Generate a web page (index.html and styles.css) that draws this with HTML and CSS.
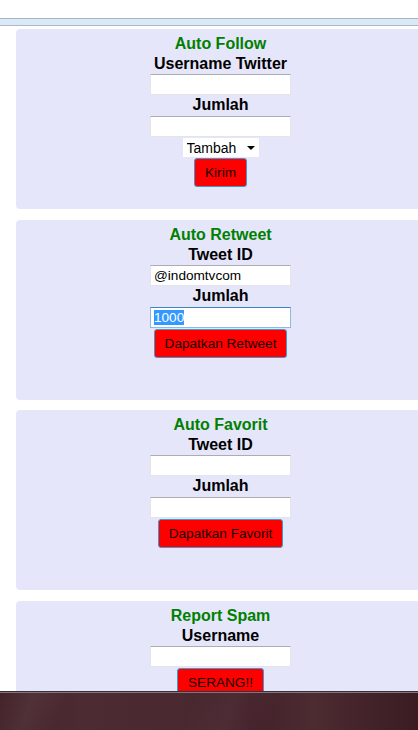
FILE: index.html
```html
<!DOCTYPE html>
<html lang="id">
<head>
<meta charset="utf-8">
<title>Auto Follow Twitter</title>
<link rel="stylesheet" href="styles.css">
</head>
<body>
<div class="topspace"></div>
<div class="topbar"></div>
<main class="cards">
  <section class="card">
    <h2 class="title">Auto Follow</h2>
    <div class="label">Username Twitter</div>
    <input class="field" type="text">
    <div class="label gap">Jumlah</div>
    <input class="field" type="text">
    <div class="select">
      <select class="select-native"><option>Tambah</option></select>
      <svg class="arrow" width="8" height="4" viewBox="0 0 8 4"><path d="M0 0H8L4 4Z" fill="#000"/></svg>
    </div>
    <button class="btn">Kirim</button>
  </section>

  <section class="card">
    <h2 class="title">Auto Retweet</h2>
    <div class="label">Tweet ID</div>
    <input class="field" type="text" value="@indomtvcom">
    <div class="label gap">Jumlah</div>
    <div class="field focused"><span class="selected">1000</span></div>
    <button class="btn">Dapatkan Retweet</button>
  </section>

  <section class="card">
    <h2 class="title">Auto Favorit</h2>
    <div class="label">Tweet ID</div>
    <input class="field" type="text">
    <div class="label gap">Jumlah</div>
    <input class="field" type="text">
    <button class="btn">Dapatkan Favorit</button>
  </section>

  <section class="card">
    <h2 class="title">Report Spam</h2>
    <div class="label">Username</div>
    <input class="field" type="text">
    <button class="btn">SERANG!!</button>
  </section>
</main>
<div class="taskbar"></div>
</body>
</html>
```

FILE: styles.css
```css
html, body {
  margin: 0;
  padding: 0;
  overflow: hidden;
  background: #ffffff;
  font-family: "Liberation Sans", Arial, sans-serif;
}

.topspace {
  height: 18px;
}

.topbar {
  height: 6px;
  background: #dce8f6;
  border-top: 1px solid #a2b5ca;
  border-bottom: 1px solid #a9bacb;
}

.cards {
  padding: 3px 0 0 16px;
  display: flex;
  flex-direction: column;
  gap: 10.67px;
}

.card {
  box-sizing: border-box;
  width: 409px;
  height: 180px;
  flex: none;
  background: #e6e6fa;
  border-radius: 4px;
  padding-top: 5px;
  display: flex;
  flex-direction: column;
  align-items: center;
}

.title {
  margin: 0;
  font-size: 16px;
  line-height: 20px;
  font-weight: bold;
  color: #008000;
}

.label {
  font-size: 16px;
  line-height: 20px;
  font-weight: bold;
  color: #000;
}

.label.gap {
  margin-bottom: 1px;
}

.field {
  box-sizing: border-box;
  width: 141px;
  height: 21px;
  margin: 0;
  padding: 0 3px;
  background: #fff;
  border: 1px solid #e3e5eb;
  border-top-color: #abadb3;
  border-radius: 0;
  font-family: "Liberation Sans", Arial, sans-serif;
  font-size: 13.6px;
  color: #000;
  outline: none;
  display: flex;
  align-items: center;
}

.field.focused {
  border-color: #8fb9e3;
  border-top-color: #3f82c4;
}

.selected {
  background: #3399ff;
  color: #fff;
  line-height: 15px;
}

.select {
  box-sizing: border-box;
  width: 76px;
  height: 19px;
  margin-top: 1px;
  background: #fff;
  display: flex;
  align-items: center;
  padding: 0 4px 0 4px;
}

.select-native {
  appearance: none;
  -webkit-appearance: none;
  border: none;
  background: transparent;
  padding: 0;
  margin: 0;
  flex: 1;
  min-width: 0;
  font-family: "Liberation Sans", Arial, sans-serif;
  font-size: 14px;
  color: #000;
  outline: none;
}

.arrow {
  flex: none;
  display: block;
}

.btn {
  box-sizing: border-box;
  height: 29px;
  margin-top: 1px;
  padding: 0 10px;
  background: #ff0000;
  border: 1px solid #3c9ad2;
  border-radius: 3px;
  font-family: "Liberation Sans", Arial, sans-serif;
  font-size: 13.6px;
  color: #1a0000;
}

.taskbar {
  position: fixed;
  left: 0;
  right: 0;
  bottom: 0;
  height: 38px;
  border-top: 1px solid #35313a;
  box-shadow: inset 0 1px 0 #847379;
  background:
    linear-gradient(110deg, rgba(255,255,255,0) 0%, rgba(255,255,255,0.05) 8%, rgba(255,255,255,0) 16%, rgba(255,255,255,0) 45%, rgba(255,255,255,0.04) 55%, rgba(255,255,255,0) 65%),
    linear-gradient(90deg, #44232a 0%, #4d2b32 20%, #4a2830 45%, #44212a 60%, #4c2b31 75%, #3a1c22 100%);
}
```
